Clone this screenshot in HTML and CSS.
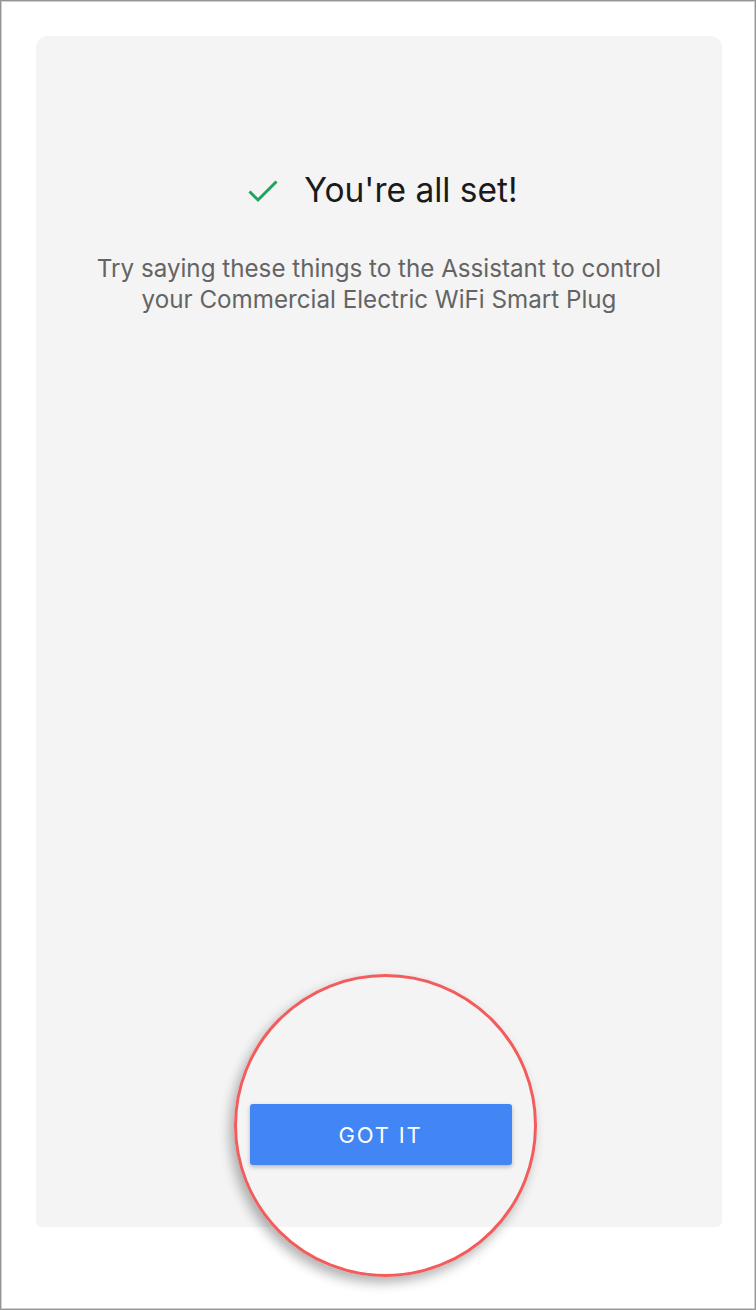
FILE: index.html
```html
<!DOCTYPE html>
<html>
<head>
<meta charset="utf-8">
<link rel="stylesheet" href="styles.css">
</head>
<body>
<div class="frame">
  <div class="card">
    <div class="title-row">
      <svg class="check" viewBox="0 0 30 24" width="30" height="24" aria-hidden="true">
        <path d="M1.5 12.5 L10 21 L28.5 2.5" fill="none" stroke="#1ea362" stroke-width="3"/>
      </svg>
      <h1 class="title">You're all set!</h1>
    </div>
    <p class="subtitle">Try saying these things to the Assistant to control<br>your Commercial Electric WiFi Smart Plug</p>
    <button class="got-it">GOT IT</button>
  </div>
  <div class="highlight"></div>
</div>
</body>
</html>
```
FILE: styles.css
```css
html, body {
  margin: 0;
  padding: 0;
  background: #ffffff;
}
body {
  font-family: Inter, Roboto, "Liberation Sans", sans-serif;
}
.frame {
  position: relative;
  width: 756px;
  height: 1310px;
  box-sizing: border-box;
  border: 1px solid #959595;
  box-shadow: inset 1px 1px 0 #cfcfcf, inset -1px -1px 0 #cfcfcf;
  padding: 35px 33px 82px 35px;
  display: flex;
}
.card {
  flex: 1;
  background: #f4f4f4;
  border-radius: 12px 12px 6px 6px;
  display: flex;
  flex-direction: column;
  align-items: center;
  padding-top: 132px;
  padding-bottom: 62px;
}
.title-row {
  display: flex;
  align-items: center;
  gap: 26px;
  margin-left: 8px;
}
.check {
  display: block;
  margin-top: 2px;
}
.title {
  margin: 0;
  font-weight: 400;
  font-size: 33.5px;
  line-height: 44px;
  color: #1a1a1a;
}
.subtitle {
  margin: 41px 0 0;
  text-align: center;
  font-size: 24.2px;
  line-height: 31px;
  color: #646464;
}
.got-it {
  margin-top: auto;
  margin-left: 3px;
  width: 262px;
  height: 61px;
  border: none;
  border-radius: 3px;
  background: #4285f4;
  color: #ffffff;
  font-family: Inter, Roboto, "Liberation Sans", sans-serif;
  font-size: 22px;
  letter-spacing: 1.8px;
  padding: 0;
  box-shadow: 0 2px 4px rgba(0, 0, 0, 0.25);
}
.highlight {
  position: absolute;
  left: 233px;
  top: 973px;
  width: 297px;
  height: 297px;
  border: 3px solid #f25c5c;
  border-radius: 50%;
  box-shadow: -4px 6px 12px rgba(0, 0, 0, 0.3);
}
```
